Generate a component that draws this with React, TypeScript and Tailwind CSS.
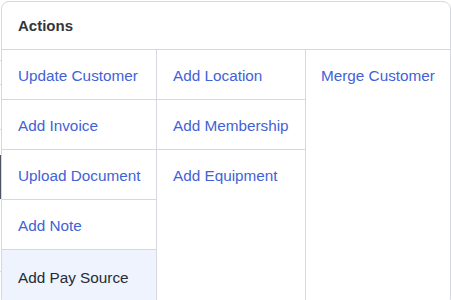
import React from 'react';
import { clsx } from 'clsx';

const columns: string[][] = [
  ['Update Customer', 'Add Invoice', 'Upload Document', 'Add Note', 'Add Pay Source'],
  ['Add Location', 'Add Membership', 'Add Equipment'],
  ['Merge Customer'],
];

const colWidths = ['w-[155px] border-r', 'w-[149px] border-r', 'flex-1'];
const padX = ['pl-[16px]', 'pl-[16px]', 'pl-[15px]'];

export default function App() {
  return (
    <div
      className="flex h-[300px] w-[451px] overflow-hidden bg-white"
      style={{ fontFamily: '"Liberation Sans", Arial, sans-serif' }}
    >
      {/* edge of the page behind the popover */}
      <div className="flex w-px flex-col">
        <div className="h-[60px]" />
        <div className="h-px bg-[#dcdde3]" />
        <div className="h-[23px]" />
        <div className="h-px bg-[#dcdde3]" />
        <div className="h-[44px]" />
        <div className="h-px bg-[#dcdde3]" />
        <div className="h-[25px]" />
        <div className="h-[44px] bg-[#4b5563]" />
        <div className="h-[72px]" />
        <div className="h-px bg-[#dcdde3]" />
      </div>

      <div className="flex-1 pt-px">
        <div className="flex h-[305px] flex-col overflow-hidden rounded-lg border border-[#d6d8e1] bg-white">
          <div className="flex h-[48px] shrink-0 items-center border-b border-[#d6d8e1] pl-[16px] pt-[2px] text-[15px] font-bold text-[#33363d]">
            Actions
          </div>
          <div className="flex flex-1">
            {columns.map((items, ci) => (
              <div key={ci} className={clsx('flex flex-col border-[#d6d8e1]', colWidths[ci])}>
                {items.map((label, i) => {
                  const last = i === items.length - 1;
                  const active = label === 'Add Pay Source';
                  return (
                    <div
                      key={label}
                      className={clsx(
                        'flex h-[50px] shrink-0 items-center text-[15.3px] border-[#d6d8e1]',
                        padX[ci],
                        !last && 'border-b',
                        active ? 'flex-1 items-start pt-[17px] bg-[#eef3fd] text-[#252a36]' : 'pt-[3px] text-[#4262d6]'
                      )}
                    >
                      {label}
                    </div>
                  );
                })}
              </div>
            ))}
          </div>
        </div>
      </div>
    </div>
  );
}
